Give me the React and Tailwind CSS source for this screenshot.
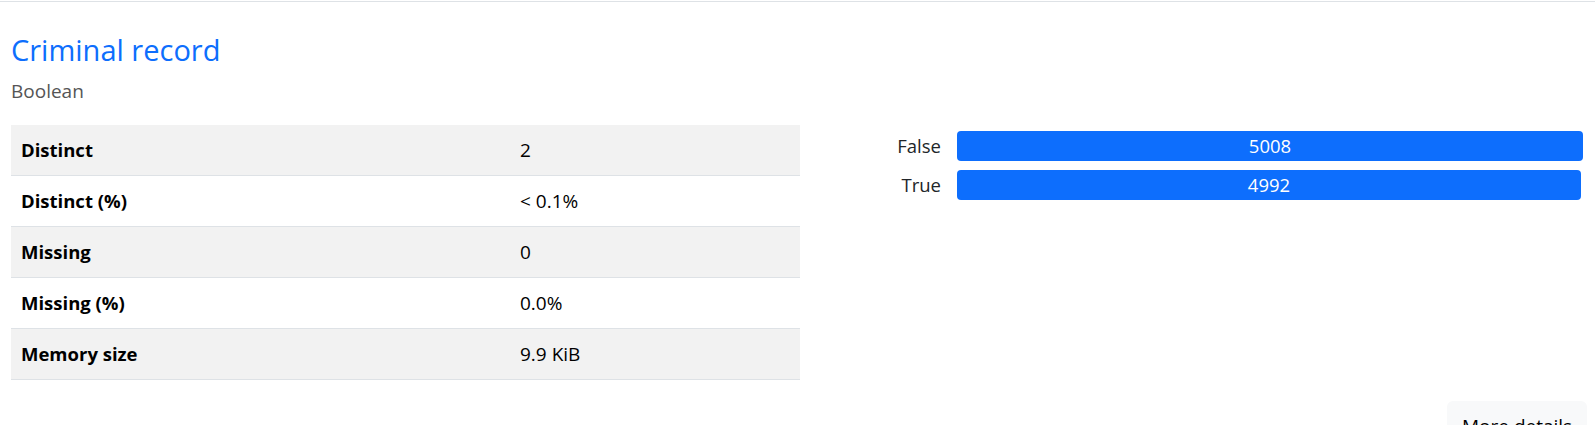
import React from "react";

const rows = [
  ["Distinct", "2"],
  ["Distinct (%)", "< 0.1%"],
  ["Missing", "0"],
  ["Missing (%)", "0.0%"],
  ["Memory size", "9.9 KiB"],
];

const bars = [
  { label: "False", value: 5008 },
  { label: "True", value: 4992 },
];

export default function App() {
  const max = 5008;
  return (
    <div
      className="w-[1595px] h-[425px] overflow-hidden bg-white text-[#212529]"
      style={{ fontFamily: '"Open Sans", "Noto Sans", sans-serif' }}
    >
      <div className="pt-[1px]">
        <div className="border-t border-[#dee2e6]" />
      </div>
      <div className="px-[11px] pt-[31px]">
        <h3 className="text-[29px] leading-[34px] text-[#0d6efd] font-medium">
          Criminal record
        </h3>
        <div className="text-[19px] leading-[28px] text-[#555] mt-[10px]">Boolean</div>
        <div className="flex mt-[20px]">
          <div className="w-[789px]">
            {rows.map(([k, v], i) => (
              <div
                key={k}
                className={`grid grid-cols-[498px_1fr] h-[51px] items-center border-b border-[#dee2e6] ${
                  i % 2 === 0 ? "bg-[#f2f2f2]" : "bg-white"
                }`}
              >
                <div className="pl-[10px] font-bold text-[18.5px] text-black">{k}</div>
                <div className="pl-[11px] text-[19px] text-black">{v}</div>
              </div>
            ))}
          </div>
          <div className="flex-1 pt-[6px] pr-[1px]">
            <div className="flex flex-col gap-[9px]">
              {bars.map((b) => (
                <div key={b.label} className="flex items-center">
                  <div className="w-[157px] text-right pr-[16px] text-[18.5px] text-[#212529]">
                    {b.label}
                  </div>
                  <div className="flex-1">
                    <div
                      className="h-[30px] rounded-[4px] bg-[#0d6efd] text-white text-[18.5px] flex items-center justify-center"
                      style={{ width: `${(b.value / max) * 100}%` }}
                    >
                      {b.value}
                    </div>
                  </div>
                </div>
              ))}
            </div>
          </div>
        </div>
        <div className="flex justify-end mt-[21px]">
          <button className="w-[140px] h-[44px] mr-[-3px] rounded-[6px] bg-[#f8f9fa] text-[19px] text-black text-left pl-[15px] pt-[5px] leading-[28px] self-start whitespace-nowrap">
            More details
          </button>
        </div>
      </div>
    </div>
  );
}
